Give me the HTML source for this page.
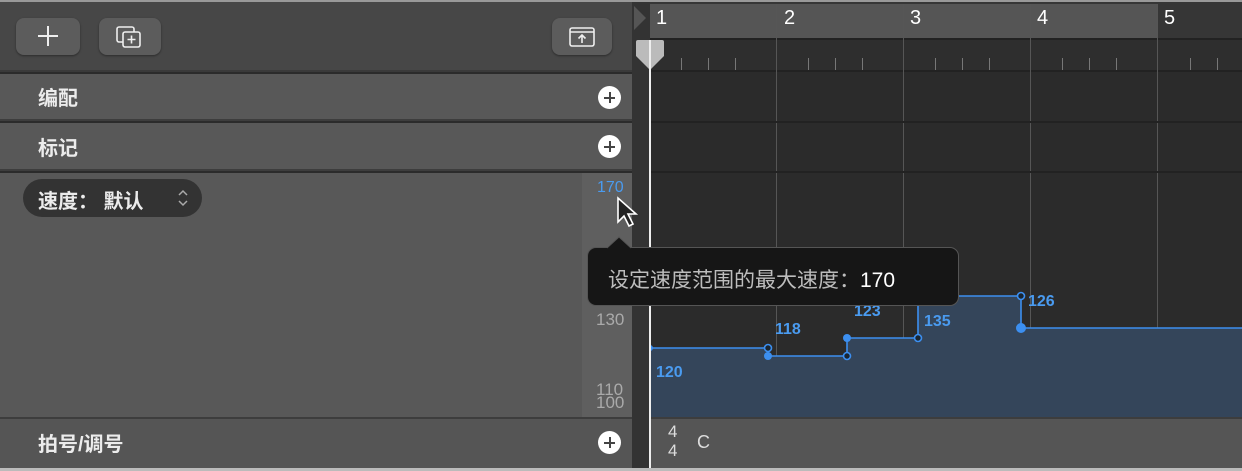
<!DOCTYPE html><html><head><meta charset="utf-8"><style>
*{margin:0;padding:0;box-sizing:border-box}
body{width:1242px;height:471px;overflow:hidden;background:#2b2b2b;font-family:"Liberation Sans","Noto Sans CJK SC",sans-serif;position:relative}
.a{position:absolute}
.btn{position:absolute;top:18px;height:37px;background:#5c5c5c;border-radius:8px;box-shadow:0 1px 2px rgba(0,0,0,.4)}
.lbl{position:absolute;left:38px;color:#ececec;font-size:20px;font-weight:bold}
.plus{position:absolute;left:598px;width:23px;height:23px;border-radius:50%;background:#fff}
.plus:before{content:"";position:absolute;left:6px;top:10.5px;width:11px;height:2px;background:#444}
.plus:after{content:"";position:absolute;left:10.5px;top:6px;width:2px;height:11px;background:#444}
.num{position:absolute;color:#fff;font-size:20px}
.bl{position:absolute;width:1px;background:#565656}
.tv{position:absolute;color:#4a9bf0;font-size:16px;font-weight:bold}
.sc{position:absolute;color:#aaa;font-size:17px;left:596px}
</style></head><body>
<!-- left panel -->
<div class="a" style="left:0;top:0;width:632px;height:72px;background:#474747;border-bottom:2px solid #3a3a3a"></div>
<div class="btn" style="left:16px;width:64px"><div class="a" style="left:22px;top:17px;width:20px;height:2px;background:#eee"></div><div class="a" style="left:31px;top:8px;width:2px;height:20px;background:#eee"></div></div>
<div class="btn" style="left:99px;width:62px"><svg class="a" style="left:14px;top:6px" width="34" height="26" viewBox="0 0 34 26" fill="none" stroke="#eee" stroke-width="1.6"><rect x="4" y="3" width="17" height="15" rx="2"/><rect x="10" y="8" width="17" height="15" rx="2" fill="#5c5c5c"/><path d="M18.5 11.5v8M14.5 15.5h8"/></svg></div>
<div class="btn" style="left:552px;width:60px"><svg class="a" style="left:16px;top:8px" width="28" height="22" viewBox="0 0 28 22" fill="none" stroke="#eee" stroke-width="1.6"><rect x="2" y="2" width="24" height="18" rx="2"/><path d="M2 6h24M14 17v-8M10.5 12.5L14 9l3.5 3.5"/></svg></div>
<div class="a" style="left:0;top:74px;width:632px;height:47px;background:#585858;border-bottom:2px solid #3d3d3d"></div>
<div class="a" style="left:0;top:123px;width:632px;height:48px;background:#585858;border-bottom:2px solid #3d3d3d"></div>
<div class="a" style="left:0;top:173px;width:632px;height:244px;background:#585858"></div>
<div class="a" style="left:582px;top:173px;width:50px;height:244px;background:#5f5f5f"></div>
<div class="a" style="left:0;top:417px;width:632px;height:51px;background:#555;border-top:2px solid #3d3d3d"></div>
<div class="lbl" style="top:82px">编配</div>
<div class="lbl" style="top:132px">标记</div>
<div class="lbl" style="top:428px">拍号/调号</div>
<div class="plus" style="top:86px"></div>
<div class="plus" style="top:135px"></div>
<div class="plus" style="top:431px"></div>
<div class="a" style="left:23px;top:179px;width:179px;height:38px;border-radius:19px;background:#333"></div>
<div class="lbl" style="top:185px;left:38px">速度：&nbsp;默认</div>
<svg class="a" style="left:176px;top:186px" width="14" height="24" viewBox="0 0 14 24" fill="none" stroke="#aaa" stroke-width="1.5"><path d="M3 9l4-4 4 4M3 15l4 4 4-4"/></svg>
<div class="tv" style="left:597px;top:179px;font-weight:normal">170</div>
<div class="sc" style="top:310px">130</div>
<div class="sc" style="top:380px">110</div>
<div class="sc" style="top:393px">100</div>
<!-- right side -->
<div class="a" style="left:632px;top:0;width:18px;height:468px;background:#333"></div>
<div class="a" style="left:650px;top:0;width:592px;height:38px;background:#363636"></div>
<div class="a" style="left:650px;top:4px;width:508px;height:34px;background:#555"></div>
<div class="a" style="left:650px;top:38px;width:592px;height:34px;background:#2e2e2e;border-top:2px solid #222;border-bottom:2px solid #222"></div>
<svg class="a" style="left:634px;top:6px" width="14" height="24"><path d="M0 0L12 12 0 24z" fill="#555"/></svg>
<div class="num" style="left:656px;top:7px">1</div><div class="num" style="left:784px;top:7px">2</div><div class="num" style="left:910px;top:7px">3</div><div class="num" style="left:1037px;top:7px">4</div><div class="num" style="left:1164px;top:7px">5</div>
<div class="bl" style="left:776px;top:4px;height:413px"></div><div class="bl" style="left:903px;top:4px;height:413px"></div><div class="bl" style="left:1030px;top:4px;height:413px"></div><div class="bl" style="left:1157px;top:4px;height:413px"></div>
<svg class="a" style="left:650px;top:38px" width="592" height="34"><g stroke="#777" stroke-width="1"><path d="M31.5 20v12M58.5 20v12M85.5 20v12M158.5 20v12M185.5 20v12M212.5 20v12M285.5 20v12M312.5 20v12M339.5 20v12M412.5 20v12M439.5 20v12M466.5 20v12M540.5 20v12M567.5 20v12"/></g></svg>
<div class="a" style="left:650px;top:121px;width:592px;height:2px;background:#222"></div>
<div class="a" style="left:650px;top:171px;width:592px;height:2px;background:#222"></div>
<!-- tempo graph -->
<svg class="a" style="left:650px;top:173px" width="592" height="244">
<path d="M0 175H118V183H197V165H268V123H371V155H592V244H0z" fill="#34455a"/>
<path d="M0 175H118M118 175V183H197V165H268V123H371V155H592" stroke="#3c8ff0" stroke-width="1.6" fill="none"/>
<g fill="#3c8ff0"><circle cx="0" cy="175" r="3"/><circle cx="118" cy="183" r="4"/><circle cx="197" cy="165" r="4"/><circle cx="371" cy="155" r="5"/></g>
<g fill="#1a2530" stroke="#3c8ff0" stroke-width="1.6"><circle cx="118" cy="175" r="3.5"/><circle cx="197" cy="183" r="3.5"/><circle cx="268" cy="165" r="3.5"/><circle cx="371" cy="123" r="3.5"/></g>
</svg>
<div class="tv" style="left:656px;top:364px">120</div>
<div class="tv" style="left:775px;top:321px">118</div>
<div class="tv" style="left:854px;top:303px">123</div>
<div class="tv" style="left:924px;top:313px">135</div>
<div class="tv" style="left:1028px;top:293px">126</div>
<div class="a" style="left:650px;top:417px;width:592px;height:51px;background:#555;border-top:2px solid #3d3d3d"></div>
<div class="a" style="left:668px;top:422px;color:#ddd;font-size:17px;line-height:19px">4<br>4</div>
<div class="a" style="left:697px;top:432px;color:#ddd;font-size:18px">C</div>
<div class="a" style="left:0;top:468px;width:1242px;height:3px;background:#bbb"></div>
<div class="a" style="left:0;top:0;width:1242px;height:2px;background:#999"></div>
<!-- playhead -->
<div class="a" style="left:649px;top:40px;width:2px;height:428px;background:#eee"></div>
<svg class="a" style="left:634px;top:38px" width="32" height="34"><path d="M4 2h24a2 2 0 0 1 2 2v14L16 32 2 18V4a2 2 0 0 1 2-2z" fill="#bbb"/><rect x="15" y="2" width="2" height="30" fill="#eee"/></svg>
<!-- tooltip -->
<div class="a" style="left:587px;top:247px;width:372px;height:59px;background:#161616;border:1px solid #555;border-radius:9px"></div>
<svg class="a" style="left:607px;top:236px" width="24" height="13"><path d="M0 12L12 1 24 12" fill="#161616" stroke="#555"/></svg>
<div class="a" style="left:608px;top:264px;font-size:21px;color:#bdbdbd">设定速度范围的最大速度：<span style="color:#fff">170</span></div>
<!-- cursor -->
<svg class="a" style="left:616px;top:196px" width="26" height="34" viewBox="0 0 26 34"><path d="M2 2v24l6-6 5 10 4-2-5-10h8z" fill="#222" stroke="#fff" stroke-width="1.6"/></svg>
</body></html>
